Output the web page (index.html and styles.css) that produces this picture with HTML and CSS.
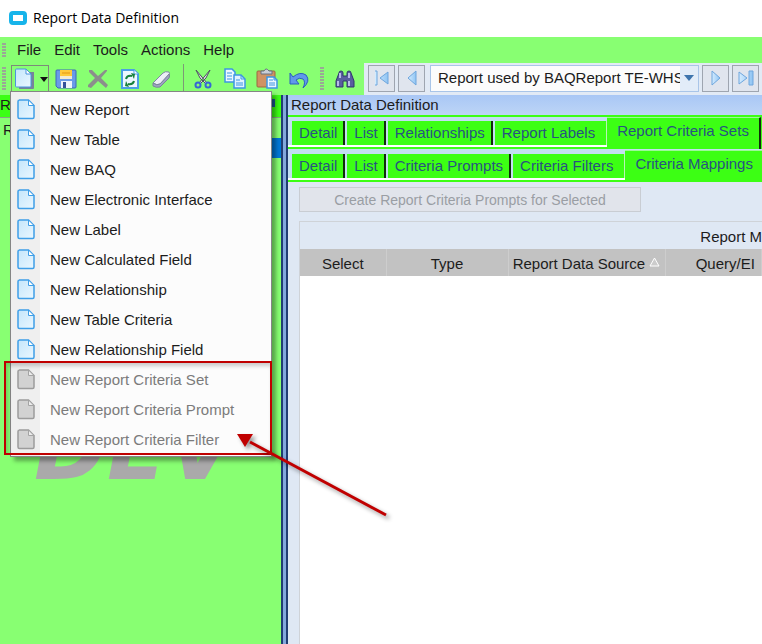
FILE: index.html
```html
<!DOCTYPE html>
<html lang="en">
<head>
    <meta charset="UTF-8">
    <meta name="viewport" content="width=device-width, initial-scale=1.0">
    <title>Report Data Definition</title>
    <link rel="stylesheet" href="styles.css">
</head>
<body>
    <!-- Shared icons -->
    <svg class="defs" width="0" height="0" aria-hidden="true">
        <defs>
            <linearGradient id="paper" x1="0" y1="0" x2="1" y2="1">
                <stop offset="0" stop-color="#c4e6fb"/>
                <stop offset="1" stop-color="#eaf7ff"/>
            </linearGradient>
            <linearGradient id="arrow-fill" x1="0" y1="0" x2="1" y2="0">
                <stop offset="0" stop-color="#d4ecff"/>
                <stop offset="1" stop-color="#8fc4f3"/>
            </linearGradient>
            <symbol id="icon-page" viewBox="0 0 18 21">
                <path d="M2 1h9.500l5.500 5.500V18q0 1.500-1.500 1.500H2.500Q1 19.500 1 18V2.500Q1 1 2.500 1z" fill="url(#paper)" stroke="#3f9fe8" stroke-width="1.500"/>
                <path d="M11.500 1v5.500h5.500z" fill="#fff" stroke="#3f9fe8" stroke-width="1"/>
            </symbol>
            <symbol id="icon-page-off" viewBox="0 0 18 21">
                <path d="M2 1h9.500l5.500 5.500V18q0 1.500-1.500 1.500H2.500Q1 19.500 1 18V2.500Q1 1 2.500 1z" fill="#d2d2d2" stroke="#9c9c9c" stroke-width="1.500"/>
                <path d="M11.500 1v5.500h5.500z" fill="#ececec" stroke="#a4a4a4" stroke-width="1"/>
            </symbol>
        </defs>
    </svg>

    <header class="titlebar">
        <svg class="app-icon" width="18" height="14" viewBox="0 0 18 14">
            <rect x="2" y="2" width="14" height="10" rx="2" fill="#fff" stroke="#17b4ea" stroke-width="4"/>
        </svg>
        <h1>Report Data Definition</h1>
    </header>

    <nav class="menubar">
        <span class="grip"></span>
        <button type="button">File</button>
        <button type="button">Edit</button>
        <button type="button">Tools</button>
        <button type="button">Actions</button>
        <button type="button">Help</button>
    </nav>

    <div class="toolbar">
        <div class="tools">
            <span class="grip"></span>
            <div class="new-wrap">
                <button type="button" class="new-btn" aria-label="New">
                    <svg width="22" height="22" viewBox="0 0 22 22">
                        <path d="M5 4h15v16q0 1-1 1H5z" fill="#77839a"/>
                        <path d="M2.500 1h9.500l5 5v12q0 1-1 1h-13.500q-1 0-1-1V2q0-1 1-1z" fill="url(#paper)" stroke="#4b94dd"/>
                        <path d="M12 1v5h5z" fill="#fff" stroke="#4b94dd"/>
                    </svg>
                    <svg width="8" height="5" viewBox="0 0 8 5"><path d="M0 0h8L4 5z" fill="#111"/></svg>
                </button>
                <ul class="menu">
                    <li><button type="button"><svg><use href="#icon-page"/></svg>New Report</button></li>
                    <li><button type="button"><svg><use href="#icon-page"/></svg>New Table</button></li>
                    <li><button type="button"><svg><use href="#icon-page"/></svg>New BAQ</button></li>
                    <li><button type="button"><svg><use href="#icon-page"/></svg>New Electronic Interface</button></li>
                    <li><button type="button"><svg><use href="#icon-page"/></svg>New Label</button></li>
                    <li><button type="button"><svg><use href="#icon-page"/></svg>New Calculated Field</button></li>
                    <li><button type="button"><svg><use href="#icon-page"/></svg>New Relationship</button></li>
                    <li><button type="button"><svg><use href="#icon-page"/></svg>New Table Criteria</button></li>
                    <li><button type="button"><svg><use href="#icon-page"/></svg>New Relationship Field</button></li>
                    <li><button type="button" disabled><svg><use href="#icon-page-off"/></svg>New Report Criteria Set</button></li>
                    <li><button type="button" disabled><svg><use href="#icon-page-off"/></svg>New Report Criteria Prompt</button></li>
                    <li><button type="button" disabled><svg><use href="#icon-page-off"/></svg>New Report Criteria Filter</button></li>
                </ul>
            </div>
            <button type="button" class="tool" aria-label="Save">
                <svg width="22" height="22" viewBox="0 0 22 22">
                    <path d="M1 3q0-1 1-1h18q1 0 1 1v16q0 1-1 1H3l-2-2z" fill="#6a9ae8" stroke="#3c66bb"/>
                    <path d="M5 2h12v8H5z" fill="#ffc93a"/>
                    <path d="M5 8h12v3H5z" fill="#f3ead0"/>
                    <path d="M7 5h8" stroke="#e39512" stroke-width="1"/>
                    <path d="M6 13h11v7H6z" fill="#eef3fb"/>
                    <path d="M8 14h3v6H8z" fill="#33509a"/>
                </svg>
            </button>
            <button type="button" class="tool" aria-label="Delete">
                <svg width="22" height="22" viewBox="0 0 22 22">
                    <path d="M2 2l3 0 6 6 7-6h2v1l-6 7 7 7-2 3-8-7-7 7-3-1v-2l7-7-6-6z" fill="#8b8f8c"/>
                </svg>
            </button>
            <button type="button" class="tool" aria-label="Refresh">
                <svg width="22" height="22" viewBox="0 0 22 22">
                    <path d="M3 2h12l4 4v14H3z" fill="#edf7ff" stroke="#4b9fe4" stroke-width="2"/>
                    <path d="M15 2v4h4" fill="#fff" stroke="#4b9fe4"/>
                    <path d="M7 11q1-4 6-3M15 13q-1 4-6 3" fill="none" stroke="#17813b" stroke-width="2"/>
                    <path d="M12 5l4 1-1 5zM10 19l-4-1 1-5z" fill="#17813b"/>
                </svg>
            </button>
            <button type="button" class="tool" aria-label="Clear">
                <svg width="22" height="22" viewBox="0 0 22 22">
                    <path d="M2 15L12 5q2-2 6-1 1 1 0 3L9 16q-3 2-7-1z" fill="#eceff6" stroke="#8089a3"/>
                    <path d="M9 16L18 6q1 2 0 4L9 19q-4 1-7-1v-3q4 3 7 1z" fill="#9da5c0" stroke="#79839b"/>
                </svg>
            </button>
            <span class="divider"></span>
            <button type="button" class="tool" aria-label="Cut">
                <svg width="22" height="22" viewBox="0 0 22 22">
                    <path d="M4 2l4 8 6 6 1-1zM18 2l-4 8-6 6-1-1z" fill="#dfe3e4" stroke="#4d5360"/>
                    <circle cx="6" cy="17" r="2.500" fill="none" stroke="#3767d4" stroke-width="2"/>
                    <circle cx="16" cy="17" r="2.500" fill="none" stroke="#3767d4" stroke-width="2"/>
                </svg>
            </button>
            <button type="button" class="tool" aria-label="Copy">
                <svg width="22" height="22" viewBox="0 0 22 22">
                    <path d="M1 1h7l3 3v10H1z" fill="#edf7ff" stroke="#3c96e2" stroke-width="1.500"/>
                    <path d="M3 5h5M3 8h5M3 11h5" stroke="#3c96e2"/>
                    <path d="M10 7h7l4 4v9H10z" fill="#e2f2ff" stroke="#3c96e2" stroke-width="1.500"/>
                    <path d="M17 7v4h4M12 12h4M12 15h7M12 17h7" fill="none" stroke="#3c96e2"/>
                </svg>
            </button>
            <button type="button" class="tool" aria-label="Paste">
                <svg width="22" height="22" viewBox="0 0 22 22">
                    <rect x="1" y="3" width="18" height="16" rx="1" fill="#cf9263" stroke="#9b6841"/>
                    <path d="M5 6V3h3q2-4 5 0h3v3z" fill="#c9ced6" stroke="#68717e"/>
                    <path d="M11 9h7l3 3v8H11z" fill="#edf7ff" stroke="#3c96e2" stroke-width="1.500"/>
                    <path d="M18 9v3h3M13 12h4M13 15h6M13 17h6" fill="none" stroke="#3c96e2"/>
                </svg>
            </button>
            <button type="button" class="tool" aria-label="Undo">
                <svg width="22" height="22" viewBox="0 0 22 22">
                    <path d="M2 5l3 4q7-6 13-2 5 6-3 13 3-6 0-9-4-2-7 1l3 4H2z" fill="#6099ea" stroke="#2b5fc0"/>
                </svg>
            </button>
            <span class="grip"></span>
            <button type="button" class="tool find" aria-label="Find">
                <svg width="22" height="22" viewBox="0 0 22 22">
                    <path d="M2 13l3-8q0-2 2-2t2 2v3h4V5q0-2 2-2t2 2l3 8v6h-7v-6H9v6H2z" fill="#595e9f" stroke="#31366e"/>
                    <path d="M6 5v5M15 5v5M4 13v5M15 13v5" stroke="#b7bbe6" stroke-width="2"/>
                </svg>
            </button>
        </div>

        <div class="navigator">
            <button type="button" class="nav-btn" aria-label="First">
                <svg width="16" height="16" viewBox="0 0 16 16">
                    <path d="M1 1h2v14H1M14 2v12L6 8z" fill="url(#arrow-fill)" stroke="#6ea6dd"/>
                </svg>
            </button>
            <button type="button" class="nav-btn" aria-label="Previous">
                <svg width="16" height="16" viewBox="0 0 16 16">
                    <path d="M12 1v14L4 8z" fill="url(#arrow-fill)" stroke="#6ea6dd"/>
                </svg>
            </button>
            <div class="combo">
                <select aria-label="Report">
                    <option>Report used by BAQReport TE-WHS</option>
                </select>
                <svg width="10" height="6" viewBox="0 0 10 6"><path d="M0 0h10L5 6z" fill="#3f75ad"/></svg>
            </div>
            <button type="button" class="nav-btn" aria-label="Next">
                <svg width="16" height="16" viewBox="0 0 16 16">
                    <path d="M4 1v14l8-7z" fill="url(#arrow-fill)" stroke="#6ea6dd"/>
                </svg>
            </button>
            <button type="button" class="nav-btn" aria-label="Last">
                <svg width="16" height="16" viewBox="0 0 16 16">
                    <path d="M1 2v12l8-6zM11 1h4v14h-4z" fill="url(#arrow-fill)" stroke="#6ea6dd"/>
                </svg>
            </button>
        </div>
    </div>

    <div class="workspace">
        <aside class="tree">
            <div class="tree-title"><span>R</span><span class="pin"></span></div>
            <div class="tree-root">R</div>
            <div class="tree-selected"></div>
            <div class="watermark">DEV</div>
        </aside>
        <div class="splitter"></div>
        <main class="sheet">
            <h2>Report Data Definition</h2>
            <div class="tabs" role="tablist">
                <button type="button" role="tab">Detail</button>
                <button type="button" role="tab">List</button>
                <button type="button" role="tab">Relationships</button>
                <button type="button" role="tab" class="last">Report Labels</button>
                <button type="button" role="tab" class="active edge" aria-selected="true">Report Criteria Sets</button>
                <span class="more"></span>
            </div>
            <div class="tabs" role="tablist">
                <button type="button" role="tab">Detail</button>
                <button type="button" role="tab">List</button>
                <button type="button" role="tab">Criteria Prompts</button>
                <button type="button" role="tab" class="last">Criteria Filters</button>
                <button type="button" role="tab" class="active" aria-selected="true">Criteria Mappings</button>
                <span class="more"></span>
            </div>
            <div class="panel">
                <button type="button" class="create" disabled>Create Report Criteria Prompts for Selected</button>
                <div class="grid">
                    <table>
                        <caption>Report M</caption>
                        <colgroup>
                            <col class="col-select">
                            <col class="col-type">
                            <col class="col-source">
                            <col>
                        </colgroup>
                        <thead>
                            <tr>
                                <th>Select</th>
                                <th>Type</th>
                                <th>Report Data Source <svg class="sort" width="11" height="10" viewBox="0 0 11 10"><path d="M5.500 1L10 9H1z" fill="#ccc" stroke="#fff"/></svg></th>
                                <th class="query">Query/EI</th>
                            </tr>
                        </thead>
                    </table>
                </div>
            </div>
        </main>
    </div>

    <!-- Callout over the disabled menu items -->
    <div class="callout-box"></div>
    <svg class="callout-arrow" width="160" height="96" viewBox="0 0 160 96">
        <path d="M150 82L14 9" stroke="#c00000" stroke-width="3"/>
        <path d="M1 1h16L9 14z" fill="#c00000"/>
    </svg>
</body>
</html>
```

FILE: styles.css
```css
* {
    box-sizing: border-box;
}
body {
    margin: 0;
    min-height: 100vh;
    display: flex;
    flex-direction: column;
    position: relative;
    overflow: hidden;
    font-family: "Liberation Sans", Arial, sans-serif;
    font-size: 15px;
    line-height: 20px;
    color: #1c1c1c;
    background: #88ff72;
}
button, select {
    font: inherit;
    color: inherit;
    margin: 0;
    padding: 0;
    border: 0;
    background: none;
    white-space: nowrap;
}
.defs {
    position: absolute;
}

/* Title and menu */
.titlebar {
    display: flex;
    align-items: center;
    gap: 6px;
    height: 37px;
    padding: 0 9px 2px;
    background: #fff;
}
.titlebar h1 {
    margin: 0;
    font: 14px/20px "Open Sans", "Noto Sans", sans-serif;
    color: #000;
}
.menubar {
    display: flex;
    align-items: center;
    gap: 13px;
    height: 26px;
    padding-left: 2px;
}
.menubar .grip {
    margin-right: -2px;
    height: 15px;
}
.grip {
    flex: none;
    width: 4px;
    height: 24px;
    background: repeating-linear-gradient(#9aa896 0 2px, transparent 2px 3px);
}

/* Toolbar */
.toolbar {
    display: flex;
    height: 32px;
}
.tools {
    flex: none;
    display: flex;
    align-items: center;
    width: 364px;
    padding-left: 2px;
}
.new-wrap {
    position: relative;
    margin: 0 6px 0 5px;
}
.new-btn {
    display: flex;
    align-items: center;
    gap: 4px;
    width: 38px;
    height: 28px;
    padding-left: 2px;
    border: 1px solid #7d8a7a;
}
.tool {
    width: 22px;
    height: 22px;
    margin-right: 10px;
}
.tool svg {
    display: block;
}
.divider {
    width: 1px;
    height: 30px;
    margin-right: 8px;
    background: #7d9a76;
}
.find {
    margin: 0 0 0 10px;
}
.menu {
    position: absolute;
    z-index: 2;
    top: 26px;
    left: -1px;
    width: 262px;
    margin: 0;
    padding: 3px 0 1px;
    list-style: none;
    border: 1px solid #858585;
    background: linear-gradient(90deg, #efefef 29px, #fcfcfc 29px);
    box-shadow: 4px 4px 4px rgba(0, 0, 0, 0.35);
}
.menu button {
    display: flex;
    align-items: center;
    gap: 15px;
    width: 100%;
    height: 30px;
    padding: 0 0 1px 6px;
}
.menu button:disabled {
    color: #7b7b7b;
}
.menu svg {
    width: 18px;
    height: 21px;
}
.navigator {
    flex: 1;
    display: flex;
    align-items: center;
    gap: 3px;
    min-width: 0;
    padding: 0 3px 2px 4px;
    background: #e2eaf5;
}
.nav-btn {
    flex: none;
    display: flex;
    align-items: center;
    justify-content: center;
    width: 27px;
    height: 27px;
    border: 1px solid #9ea5b0;
    background: #e0e5ee;
}
.combo {
    flex: 1;
    display: flex;
    align-items: center;
    min-width: 0;
    height: 27px;
    margin-left: 2px;
    padding-right: 4px;
    border: 1px solid #a9c5e8;
    background: linear-gradient(90deg, #fcfcfc calc(100% - 18px), #e2ecf8 calc(100% - 18px));
}
.combo select {
    flex: 1;
    min-width: 0;
    height: 25px;
    margin-right: 4px;
    padding-left: 7px;
    appearance: none;
    text-overflow: clip;
}
.combo svg {
    flex: none;
}

/* Tree and sheet */
.workspace {
    flex: 1;
    display: flex;
}
.tree {
    flex: none;
    width: 281px;
}
.tree-title {
    display: flex;
    justify-content: space-between;
    height: 23px;
    background: #3cff14;
    border-bottom: 1px solid #8aa584;
}
.pin {
    width: 3px;
    height: 8px;
    margin: 4px 6px;
    background: #1d5792;
}
.tree-root {
    height: 20px;
    padding: 2px 3px;
}
.tree-selected {
    height: 20px;
    background: linear-gradient(90deg, transparent 50%, #0078d7 50%);
}
.watermark {
    margin-top: 246px;
    padding-left: 34px;
    font: italic bold 88px/90px "DejaVu Sans", Verdana, sans-serif;
    color: #aaa9aa;
}
.splitter {
    flex: none;
    width: 7px;
    background: #82a8dc;
    border: solid #203d72;
    border-width: 0 2px;
}
.sheet {
    flex: 1;
    display: flex;
    flex-direction: column;
    min-width: 0;
    background: #dfe8f4;
}
.sheet h2 {
    margin: 0;
    height: 20px;
    padding-left: 3px;
    font-size: 15px;
    font-weight: normal;
    background: linear-gradient(#a9c7f5, #bdd5f6);
}
.tabs {
    display: flex;
    align-items: flex-end;
    height: 34px;
    padding-left: 4px;
    overflow: hidden;
    border-top: 2px solid #3cff14;
    background: linear-gradient(#c3dff2 28px, #fff 28px 30px, #3cff14 30px);
}
.tabs + .tabs {
    height: 33px;
    border-top: 0;
    background: linear-gradient(#c3dff2 29px, #fff 29px 31px, #3cff14 31px);
}
.tabs button {
    flex: none;
    height: 24px;
    margin: 0 2px 4px 0;
    padding: 0 6px 0 7px;
    color: #285381;
    background: #3cff14;
    border-right: 2px solid #102c0b;
}
.tabs .last {
    margin-right: 0;
    padding-right: 11px;
    border-right: 1px solid #b9f4b6;
}
.tabs .active {
    height: 32px;
    margin: 0;
    padding: 0 10px 6px;
    border-top: 1px solid #9df79a;
    border-right: 0;
}
.tabs .edge {
    border-right: 2px solid #102c0b;
}
.more {
    flex: 1;
    height: 32px;
    background: #3cff14;
}
.panel {
    flex: 1;
    display: flex;
    flex-direction: column;
    align-items: flex-start;
    gap: 9px;
    padding: 5px 0 0 11px;
}
.create {
    width: 342px;
    height: 25px;
    font-size: 14px;
    color: #9a9ea4;
    background: #e1e4eb;
    border: 1px solid #c9cdd3;
}
.grid {
    flex: 1;
    align-self: stretch;
    background: #fff;
    border: solid #cfd3d8;
    border-width: 1px 0 0 1px;
}
.grid table {
    width: 100%;
    table-layout: fixed;
    border-collapse: collapse;
}
.grid caption {
    height: 27px;
    line-height: 29px;
    text-align: right;
    white-space: nowrap;
    background: #dfe8f4;
}
.grid th {
    height: 27px;
    padding: 2px 0 0;
    font-weight: normal;
    white-space: nowrap;
    background: #c2c2c2;
    border-right: 1px solid #cdcdcd;
}
.sort {
    vertical-align: 2px;
}
.col-select {
    width: 86px;
}
.col-type {
    width: 122px;
}
.col-source {
    width: 157px;
}
.grid .query {
    padding-left: 24px;
}

/* Callout */
.callout-box {
    position: absolute;
    z-index: 3;
    top: 361px;
    left: 4px;
    width: 268px;
    height: 94px;
    border: 2px solid #c00000;
    box-shadow: inset 2px 3px 4px rgba(0, 0, 0, 0.2);
}
.callout-arrow {
    position: absolute;
    z-index: 3;
    top: 433px;
    left: 236px;
    filter: drop-shadow(3px 3px 2px rgba(0, 0, 0, 0.4));
}
```
